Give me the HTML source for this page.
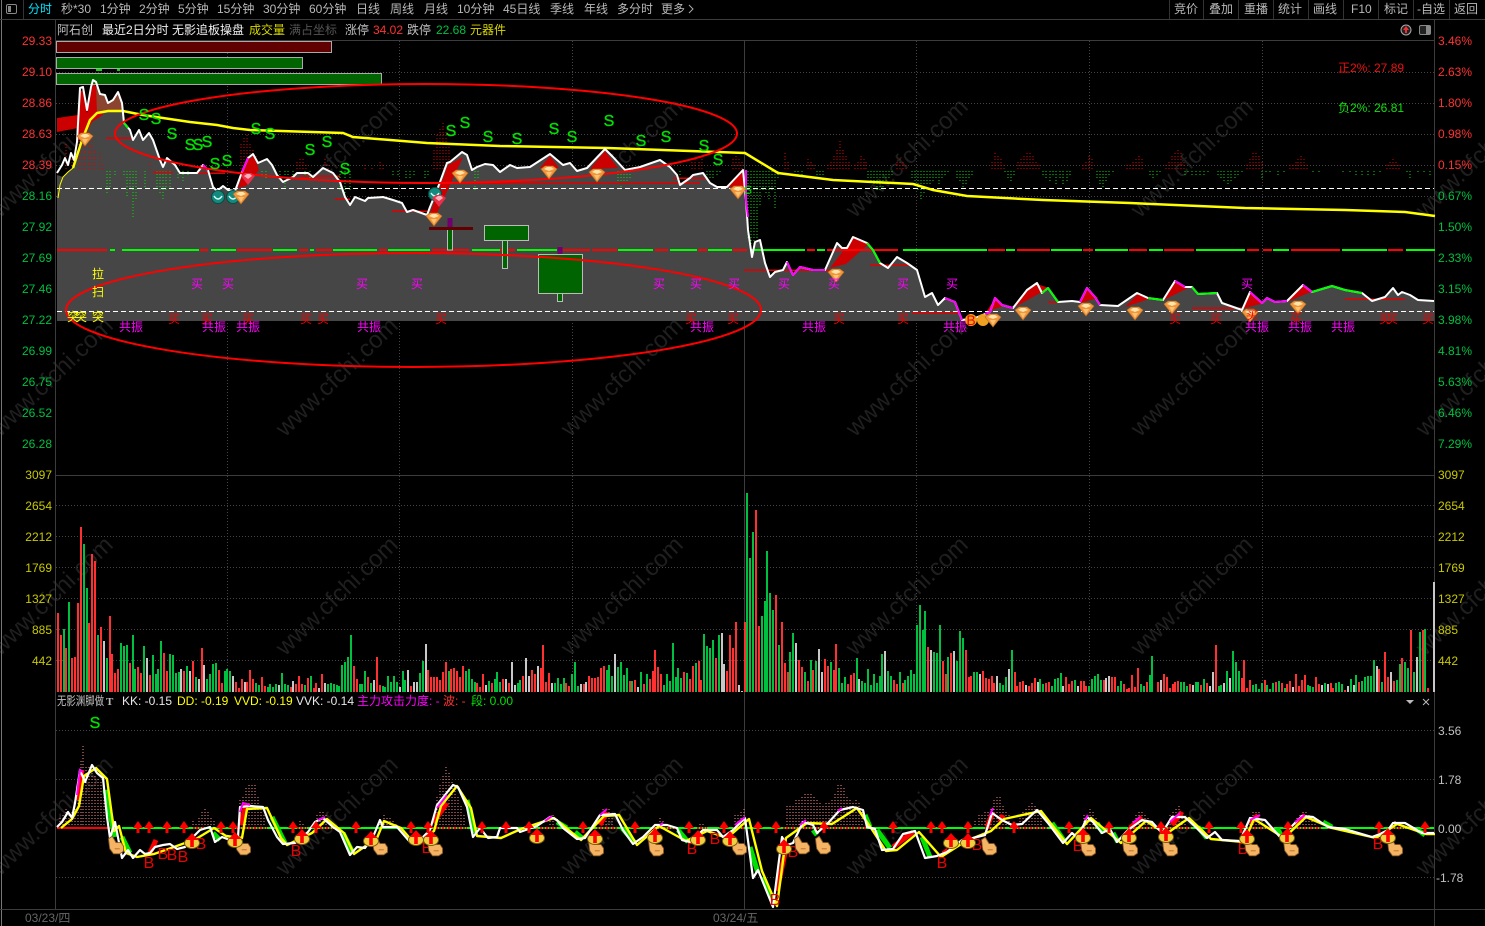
<!DOCTYPE html>
<html lang="zh"><head><meta charset="utf-8"><title>分时</title>
<style>
html,body{margin:0;padding:0;background:#000;width:1485px;height:926px;overflow:hidden}
svg{display:block}
text{font-family:"Liberation Sans","WenQuanYi Zen Hei","Noto Sans CJK SC",sans-serif;font-size:12px}
.c text{text-anchor:middle}
.w text{font-size:24px;text-anchor:middle}
.s text{font-size:16px;stroke:#00e000;stroke-width:.4}
.b text{font-size:16px}
</style></head><body>
<svg width="1485" height="926" viewBox="0 0 1485 926" xmlns="http://www.w3.org/2000/svg">
<defs>
<g id="gem"><polygon points="-8,-3 -4,-6 4,-6 8,-3 0,7" fill="#f0963c" stroke="#b86a20" stroke-width=".6"/><polygon points="-5,-3 -2,-5 2,-5 5,-3 0,-1" fill="#ffe3a8"/><polygon points="-3,0 3,0 0,5" fill="#ffc070"/></g>
<g id="gemr"><polygon points="-7,-3 -3,-6 3,-6 7,-3 0,6" fill="#e8304a"/><polygon points="-4,-3 -1,-5 2,-5 4,-3 0,0" fill="#ffb0b8"/></g>
<g id="ball"><circle r="6.5" fill="#128a7e" stroke="#0a4a44"/><path d="M-4 -1Q0 5 4 -1" fill="none" stroke="#d8fff8" stroke-width="1.5"/></g>
<polygon id="arr" points="0,0 5,7 1.5,7 1.5,12 -1.5,12 -1.5,7 -5,7" fill="#f00"/>
<g id="bag"><ellipse cx="0" cy="0" rx="7.5" ry="5.5" fill="#f0d040" stroke="#7a5a10"/><polygon points="0,-10 6,-3 1.8,-3 1.8,4 -1.8,4 -1.8,-3 -6,-3" fill="#f00"/></g>
<g id="hand" transform="scale(1.25)"><path d="M-6 -5L-3 -7L0 -2L4 -2L6 1L6 5L3 7L-2 7L-5 3Z" fill="#f4b464" stroke="#8a5a28" stroke-width=".7"/><path d="M-1 3L3 3" stroke="#c88038" fill="none"/></g>
</defs>
<rect width="1485" height="926" fill="#000"/>

<!-- watermark -->
<g class="w" fill="#1f1f1f">
<text x="51" y="166" transform="rotate(-44 51 157)">www.cfchi.com</text>
<text x="336" y="166" transform="rotate(-44 336 157)">www.cfchi.com</text>
<text x="621" y="166" transform="rotate(-44 621 157)">www.cfchi.com</text>
<text x="906" y="166" transform="rotate(-44 906 157)">www.cfchi.com</text>
<text x="1191" y="166" transform="rotate(-44 1191 157)">www.cfchi.com</text>
<text x="1476" y="166" transform="rotate(-44 1476 157)">www.cfchi.com</text>
<text x="51" y="385" transform="rotate(-44 51 376)">www.cfchi.com</text>
<text x="336" y="385" transform="rotate(-44 336 376)">www.cfchi.com</text>
<text x="621" y="385" transform="rotate(-44 621 376)">www.cfchi.com</text>
<text x="906" y="385" transform="rotate(-44 906 376)">www.cfchi.com</text>
<text x="1191" y="385" transform="rotate(-44 1191 376)">www.cfchi.com</text>
<text x="1476" y="385" transform="rotate(-44 1476 376)">www.cfchi.com</text>
<text x="51" y="604" transform="rotate(-44 51 595)">www.cfchi.com</text>
<text x="336" y="604" transform="rotate(-44 336 595)">www.cfchi.com</text>
<text x="621" y="604" transform="rotate(-44 621 595)">www.cfchi.com</text>
<text x="906" y="604" transform="rotate(-44 906 595)">www.cfchi.com</text>
<text x="1191" y="604" transform="rotate(-44 1191 595)">www.cfchi.com</text>
<text x="1476" y="604" transform="rotate(-44 1476 595)">www.cfchi.com</text>
<text x="51" y="824" transform="rotate(-44 51 815)">www.cfchi.com</text>
<text x="336" y="824" transform="rotate(-44 336 815)">www.cfchi.com</text>
<text x="621" y="824" transform="rotate(-44 621 815)">www.cfchi.com</text>
<text x="906" y="824" transform="rotate(-44 906 815)">www.cfchi.com</text>
<text x="1191" y="824" transform="rotate(-44 1191 815)">www.cfchi.com</text>
<text x="1476" y="824" transform="rotate(-44 1476 815)">www.cfchi.com</text>
</g>

<!-- frame -->
<g shape-rendering="crispEdges" fill="none">
<path d="M1.5 0V926" stroke="#777"/>
<path d="M0 19.5H1485M56 40.5H1434M56 475.5H1434M0 909.5H1485M55.5 19V909M1434.5 19V926M744.5 40V909" stroke="#3c3c3c"/>
<path d="M23.5 0V19M1169.5 0V19M1203.5 0V19M1238.5 0V19M1273.5 0V19M1308.5 0V19M1343.5 0V19M1378.5 0V19M1413.5 0V19M1449.5 0V19" stroke="#333"/>
<!-- grid -->
<path stroke="#444" stroke-dasharray="1 2" d="M56 72.5H1434M56 103.5H1434M56 134.5H1434M56 165.5H1434M56 196.5H1434M56 505.5H1434M56 536.5H1434M56 567.5H1434M56 598.5H1434M56 629.5H1434M56 660.5H1434M56 730.5H1434M56 779.5H1434M56 877.5H1434M227.5 41V692M399.5 41V692M572.5 41V692M916.5 41V692M1089.5 41V692M1262.5 41V692"/>
</g>

<!-- gray area -->
<polygon fill="#464646" points="57,321 57,175 63,177 73,168 82,140 90,120 97,113 108,111 122,111 124,123 130,130 133,140 139,130 143,140 149,133 153,140 160,160 163,167 167,158 175,165 180,173 197,173 203,165 208,170 213,187 217,191 223,186 228,190 235,191 242,172 248,158 253,154 258,163 267,159 272,165 277,175 283,182 293,177 297,173 308,173 313,177 323,168 333,173 340,182 345,197 350,205 355,197 365,201 368,198 383,197 393,200 402,203 407,212 413,210 427,215 430,207 437,190 447,163 450,162 462,152 467,155 472,170 477,167 485,164 493,165 500,172 510,165 517,168 530,167 550,154 563,165 570,163 577,171 587,168 605,149 613,157 625,170 640,167 660,160 670,167 677,175 680,185 690,178 693,175 703,173 710,183 717,187 727,187 743,170 746,200 748,230 752,257 755,242 760,240 765,263 770,277 775,272 783,270 787,262 793,275 800,267 813,270 825,270 837,243 842,248 847,248 853,237 867,243 873,250 880,263 888,268 897,257 907,263 917,270 925,297 932,293 938,305 945,298 955,302 962,320 975,318 990,312 995,298 1002,305 1013,308 1027,290 1037,283 1042,293 1048,288 1058,302 1072,301 1080,302 1087,288 1095,297 1100,305 1118,306 1137,293 1148,298 1163,300 1175,281 1185,287 1192,287 1198,294 1217,293 1222,303 1242,310 1250,292 1262,303 1267,298 1275,302 1287,301 1303,285 1312,292 1332,286 1345,290 1362,293 1372,301 1385,297 1393,288 1398,295 1402,292 1410,295 1418,300 1434,301 1434,321"/>

<!-- dotted columns top chart -->
<path fill="none" shape-rendering="crispEdges" stroke="#e00000" stroke-dasharray="1 2" d="M66 169V143M72 169V155M79 169V110M82 169V137M85 169V137M89 169V130M92 169V140M95 169V150M100 169V153M103 169V165M150 169V160M241 169V142M244 169V137M247 169V134M250 169V142M253 169V148M256 169V155M297 169V160M300 169V157M303 169V157M306 169V165M325 169V158M328 169V165M365 169V165M372 169V166M380 169V162M383 169V165M434 169V148M437 169V135M440 169V127M443 169V123M446 169V130M449 169V143M692 169V160M695 169V158M699 169V160M702 169V158M733 169V157M736 169V155M739 169V157M742 169V160M785 169V153M788 169V160M808 169V158M811 169V162M814 169V163M828 169V165M831 169V160M834 169V155M837 169V150M840 169V140M843 169V150M846 169V155M849 169V160M855 169V163M858 169V160M861 169V155M864 169V158M866 169V160M897 169V160M900 169V158M903 169V162M906 169V165M992 169V160M995 169V153M998 169V154M1001 169V158M1004 169V165M1018 169V160M1021 169V157M1024 169V155M1027 169V152M1030 169V153M1033 169V156M1036 169V160M1039 169V164M1083 169V165M1086 169V160M1089 169V155M1092 169V158M1127 169V165M1130 169V163M1133 169V160M1136 169V157M1139 169V155M1142 169V158M1166 169V165M1169 169V160M1172 169V155M1175 169V152M1178 169V150M1181 169V152M1184 169V160M1247 169V165M1250 169V158M1253 169V152M1256 169V151M1259 169V155M1262 169V160M1290 169V165M1293 169V163M1296 169V160M1298 169V158M1301 169V155M1304 169V158M1307 169V163M1387 169V165M1390 169V162M1393 169V158M1396 169V160M1399 169V163"/>
<path fill="none" shape-rendering="crispEdges" stroke="#00e000" stroke-dasharray="1 2" d="M107 171V193M110 171V187M115 171V175M124 171V177M127 171V197M130 171V187M133 171V217M136 171V200M145 171V187M157 171V187M160 171V195M163 171V200M166 171V190M170 171V187M178 171V180M183 171V182M188 171V175M262 171V175M266 171V180M280 171V178M285 171V187M288 171V180M293 171V175M305 171V175M310 171V178M340 171V190M345 171V197M350 171V190M393 171V175M398 171V176M406 171V180M410 171V178M414 171V176M425 171V178M428 171V175M475 171V190M478 171V180M618 171V185M621 171V187M624 171V185M627 171V182M630 171V178M680 171V175M707 171V178M710 171V180M713 171V178M717 171V175M720 171V172M748 171V240M751 171V245M754 171V247M757 171V240M760 171V205M763 171V190M766 171V195M769 171V200M772 171V190M775 171V210M778 171V180M795 171V175M798 171V176M802 171V175M817 171V177M820 171V176M823 171V177M868 171V178M871 171V182M874 171V186M877 171V190M880 171V190M883 171V188M886 171V183M889 171V178M892 171V176M912 171V180M915 171V184M918 171V190M921 171V199M924 171V195M927 171V185M930 171V186M933 171V182M936 171V180M939 171V184M942 171V180M945 171V176M948 171V174M957 171V178M960 171V183M963 171V187M966 171V184M969 171V180M972 171V176M1005 171V174M1008 171V178M1011 171V181M1014 171V176M1043 171V175M1046 171V178M1050 171V181M1053 171V177M1056 171V184M1060 171V180M1063 171V186M1067 171V181M1070 171V176M1097 171V179M1100 171V185M1103 171V188M1106 171V183M1109 171V177M1113 171V174M1150 171V175M1153 171V178M1157 171V176M1160 171V173M1185 171V177M1188 171V174M1192 171V176M1196 171V177M1200 171V175M1204 171V176M1208 171V174M1218 171V175M1221 171V179M1224 171V182M1228 171V184M1231 171V181M1235 171V178M1238 171V175M1242 171V174M1262 171V178M1266 171V174M1270 171V173M1278 171V175M1284 171V174M1313 171V174M1319 171V174M1343 171V173M1350 171V174M1356 171V175M1362 171V176M1368 171V177M1374 171V177M1380 171V174M1407 171V173M1410 171V178M1418 171V174M1424 171V174M1430 171V175"/>

<!-- red fills and brown -->
<polygon fill="#cc0000" points="57,118 78,115 78,128 57,132"/>
<polygon fill="#cc0000" points="80,92 83,90 87,113 91,92 93,84 96,86 103,115 92,122 83,140 78,140"/>
<polygon fill="#8a4430" points="96,86 100,95 105,96 108,104 113,101 118,93 122,104 123,111 108,111 97,113"/>
<g fill="#cc0000">
<polygon points="238,188 247,160 254,156 259,170 246,186"/>
<polygon points="430,213 437,213 463,157 448,165"/>
<polygon points="540,168 550,156 559,168"/>
<polygon points="590,169 605,151 618,168"/>
<polygon points="725,187 743,172 745,187"/>
<polygon points="830,268 853,238 870,243 846,264"/>
<polygon points="986,312 995,299 1003,306"/>
<polygon points="1015,307 1028,290 1037,284 1049,288"/>
<polygon points="1080,303 1086,289 1098,298"/>
<polygon points="1125,307 1138,294 1149,299"/>
<polygon points="1162,301 1176,282 1188,288"/>
<polygon points="1242,309 1250,293 1264,303"/>
<polygon points="1287,302 1303,286 1313,291"/>
</g>
<path fill="none" stroke="#e00000" stroke-width="1.5" shape-rendering="crispEdges" d="M106 138H132M335 199H350M392 211H427M153 172H173M673 178H707M744 270H833M870 265H910M912 313H960M1192 308H1242M1345 299H1405M1048 302H1058M198 173H225M300 176H340M440 183H700"/>

<!-- y=250 band -->
<g fill="none" stroke-width="2" shape-rendering="crispEdges">
<path stroke="#f00" d="M57 250H107M200 250H208M237 250H272M299 250H308M316 250H332M379 250H387M432 250H469M500 250H515M563 250H590M592 250H617M655 250H668M698 250H707M733 250H747M807 250H815M827 250H898M988 250H1005M1017 250H1050M1083 250H1093M1129 250H1147M1164 250H1194M1247 250H1259M1263 250H1272M1291 250H1340M1388 250H1403"/>
<path stroke="#0f0" d="M110 250H115M122 250H199M211 250H236M273 250H297M310 250H314M333 250H377M388 250H430M472 250H500M517 250H557M618 250H653M670 250H697M708 250H732M750 250H805M817 250H825M903 250H987M1006 250H1015M1051 250H1082M1095 250H1128M1149 250H1163M1196 250H1245M1273 250H1289M1342 250H1387M1406 250H1435"/>
</g>

<!-- dashed white -->
<path fill="none" stroke="#fff" stroke-dasharray="5 3" shape-rendering="crispEdges" d="M57 188.5H1434M57 311.5H1434"/>

<!-- candles -->
<path d="M96 70h6M117 70h3" stroke="#00e000" stroke-width="2" fill="none" shape-rendering="crispEdges"/>
<g shape-rendering="crispEdges">
<rect x="447.5" y="218" width="5" height="10" fill="#700070"/>
<rect x="447.5" y="229" width="5" height="21" fill="#006400" stroke="#bbb"/>
<rect x="429" y="227" width="44" height="3" fill="#600000"/>
<rect x="484.5" y="225.5" width="44" height="15" fill="#006400" stroke="#bbb"/>
<rect x="502.5" y="240.5" width="5" height="28" fill="#006400" stroke="#bbb"/>
<rect x="557.5" y="247" width="5" height="7" fill="#700070"/>
<rect x="538.5" y="254.5" width="44" height="39" fill="#006400" stroke="#bbb"/>
<rect x="557.5" y="293.5" width="5" height="8" fill="#006400" stroke="#bbb"/>
<rect x="56.5" y="41.5" width="275" height="11" fill="#600000" stroke="#aaa"/>
<rect x="56.5" y="57.5" width="246" height="11" fill="#006400" stroke="#aaa"/>
<rect x="56.5" y="73.5" width="325" height="11" fill="#006400" stroke="#aaa"/>
</g>

<!-- MA yellow -->
<polyline fill="none" stroke="#ffff00" stroke-width="1" points="58,198 60,185 63,177 68,172 73,168"/>
<polyline fill="none" stroke="#ffff00" stroke-width="2.5" points="73,168 82,140 90,120 97,113 108,111 123,111 143,115 163,118 190,122 217,125 233,128 250,130 343,133 353,137 427,143 500,146 607,148 745,153 778,173 833,180 913,184 933,190 967,196 1043,200 1130,203 1245,208 1345,210 1405,212 1435,216"/>

<!-- price white -->
<polyline fill="none" stroke="#fff" stroke-width="2" stroke-linejoin="round" points="57,173 62,165 65,158 68,165 71,153 74,160 77,142 80,88 83,87 87,110 91,87 93,80 96,82 100,94 105,95 108,103 113,100 118,92 122,103 124,123 130,130 133,140 139,130 143,140 149,133 153,140 160,160 163,167 167,158 175,165 180,173 197,173 203,165 208,170 213,187 217,191 223,186 228,190 235,191 242,172 248,158 253,154 258,163 267,159 272,165 277,175 283,182 293,177 297,173 308,173 313,177 323,168 333,173 340,182 345,197 350,205 355,197 365,201 368,198 383,197 393,200 402,203 407,212 413,210 427,215 430,207 437,190 447,163 450,162 462,152 467,155 472,170 477,167 485,164 493,165 500,172 510,165 517,168 530,167 550,154 563,165 570,163 577,171 587,168 605,149 613,157 625,170 640,167 660,160 670,167 677,175 680,185 690,178 693,175 703,173 710,183 717,187 727,187 743,170 746,200 748,230 752,257 755,242 760,240 765,263 770,277 775,272 783,270 787,262 793,275 800,267 813,270 825,270 837,243 842,248 847,248 853,237 867,243 873,250 880,263 888,268 897,257 907,263 917,270 925,297 932,293 938,305 945,298 955,302 962,320 975,318 990,312 995,298 1002,305 1013,308 1027,290 1037,283 1042,293 1048,288 1058,302 1072,301 1080,302 1087,288 1095,297 1100,305 1118,306 1137,293 1148,298 1163,300 1175,281 1185,287 1192,287 1198,294 1217,293 1222,303 1242,310 1250,292 1262,303 1267,298 1275,302 1287,301 1303,285 1312,292 1332,286 1345,290 1362,293 1372,301 1385,297 1393,288 1398,295 1402,292 1410,295 1418,300 1434,301"/>
<g fill="none" stroke-width="2" stroke-linejoin="round">
<path stroke="#ff00ff" d="M746 170L746 200L748 217M787 262L793 275L800 267L813 270L825 270M945 298L955 302L962 320M985 314L990 312L995 298L1002 305L1013 308M1250 292L1262 303L1267 298L1275 302L1287 301M1303 285L1312 292M203 165L208 170M242 172L248 158M1080 302L1087 288L1095 297L1100 305M1175 281L1185 287"/>
<path stroke="#0f0" d="M867 243L873 250L880 263M1042 293L1048 288L1058 302M1148 298L1163 300M1192 287L1198 294L1217 293M1312 292L1332 286L1345 290L1362 293M124 123L128 128"/>
</g>

<!-- ellipses -->
<ellipse cx="426" cy="133.5" rx="311" ry="49.5" fill="none" stroke="#f00" stroke-width="2"/>
<ellipse cx="413.5" cy="310" rx="347.5" ry="57" fill="none" stroke="#f00" stroke-width="2"/>

<!-- gems -->
<use href="#gem" x="85" y="139"/><use href="#ball" x="218" y="197"/><use href="#ball" x="233" y="197"/><use href="#gem" x="241" y="197"/><use href="#gemr" x="248" y="179"/><use href="#ball" x="435" y="194"/><use href="#gemr" x="439" y="201"/><use href="#gem" x="434" y="219"/><use href="#gem" x="460" y="176"/><use href="#gem" x="549" y="172"/><use href="#gem" x="597" y="175"/><use href="#gem" x="738" y="192"/><use href="#gem" x="836" y="275"/>
<circle cx="971" cy="320" r="6" fill="#f0a020"/><circle cx="983" cy="320" r="6" fill="#f0a020"/>
<use href="#gem" x="993" y="320"/><use href="#gem" x="1023" y="313"/><use href="#gem" x="1086" y="309"/><use href="#gem" x="1135" y="313"/><use href="#gem" x="1172" y="307"/><use href="#gem" x="1250" y="315"/><use href="#gem" x="1298" y="307"/>

<!-- S -->
<g class="c s" fill="#00e000">
<text x="144" y="120">S</text><text x="156" y="124">S</text><text x="172" y="139">S</text><text x="190" y="150">S</text><text x="198" y="150">S</text><text x="207" y="147">S</text><text x="215" y="169">S</text><text x="227" y="166">S</text><text x="256" y="134">S</text><text x="270" y="139">S</text><text x="310" y="155">S</text><text x="327" y="147">S</text><text x="345" y="174">S</text><text x="451" y="136">S</text><text x="465" y="128">S</text><text x="488" y="142">S</text><text x="517" y="144">S</text><text x="554" y="134">S</text><text x="572" y="142">S</text><text x="609" y="126">S</text><text x="641" y="146">S</text><text x="666" y="142">S</text><text x="704" y="151">S</text><text x="718" y="165">S</text><text x="95" y="728">S</text>
</g>
<text x="748" y="194" fill="#00e000" text-anchor="middle">S</text>
<g class="c" fill="#ffff00"><text x="98" y="278">拉</text><text x="98" y="296">扫</text><text x="73" y="321">突</text><text x="81" y="321">突</text><text x="98" y="321">突</text></g>
<g class="c" fill="#ff00ff"><text x="197" y="288">买</text><text x="228" y="288">买</text><text x="362" y="288">买</text><text x="417" y="288">买</text><text x="659" y="288">买</text><text x="696" y="288">买</text><text x="734" y="288">买</text><text x="784" y="288">买</text><text x="834" y="288">买</text><text x="903" y="288">买</text><text x="952" y="288">买</text><text x="1247" y="288">买</text></g>
<g class="c" fill="#ee0000"><text x="174" y="323">买</text><text x="207" y="323">买</text><text x="248" y="323">买</text><text x="306" y="323">买</text><text x="323" y="323">买</text><text x="441" y="323">买</text><text x="691" y="323">买</text><text x="733" y="323">买</text><text x="839" y="323">买</text><text x="903" y="323">买</text><text x="1175" y="323">买</text><text x="1216" y="323">买</text><text x="1252" y="319">买</text><text x="1296" y="322">买</text><text x="1385" y="323">买</text><text x="1392" y="323">买</text><text x="1428" y="323">买</text><text x="971" y="325" style="font-size:14px">B</text></g>
<g class="c" fill="#ff00ff"><text x="131" y="331">共振</text><text x="214" y="331">共振</text><text x="248" y="331">共振</text><text x="369" y="331">共振</text><text x="702" y="331">共振</text><text x="814" y="331">共振</text><text x="955" y="331">共振</text><text x="1257" y="331">共振</text><text x="1300" y="331">共振</text><text x="1343" y="331">共振</text></g>
<text x="1338" y="72" fill="#ee1010">正2%: 27.89</text>
<text x="1338" y="112" fill="#10e010">负2%: 26.81</text>

<!-- volume -->
<g fill="none" stroke-width="2" shape-rendering="crispEdges">
<path stroke="#ff3030" d="M58 692v-79M61 692v-57M66 692v-44M72 692v-34M75 692v-35M78 692v-89M81 692v-165M89 692v-69M92 692v-138M95 692v-131M101 692v-65M110 692v-76M112 692v-38M115 692v-19M118 692v-23M130 692v-29M138 692v-25M141 692v-19M150 692v-17M164 692v-39M167 692v-21M184 692v-21M193 692v-31M202 692v-44M219 692v-22M222 692v-9M236 692v-10M239 692v-4M242 692v-13M247 692v-10M250 692v-22M253 692v-13M262 692v-15M265 692v-6M291 692v-5M296 692v-8M299 692v-16M302 692v-8M308 692v-14M314 692v-4M316 692v-9M322 692v-18M354 692v-26M357 692v-13M368 692v-15M377 692v-35M380 692v-7M411 692v-6M428 692v-22M431 692v-15M434 692v-15M437 692v-15M440 692v-12M443 692v-20M446 692v-30M451 692v-23M454 692v-24M457 692v-21M460 692v-15M463 692v-26M477 692v-9M480 692v-5M483 692v-18M492 692v-9M503 692v-13M509 692v-9M523 692v-16M532 692v-22M535 692v-18M541 692v-24M543 692v-47M546 692v-10M549 692v-19M566 692v-9M569 692v-6M584 692v-8M589 692v-16M592 692v-14M595 692v-14M598 692v-15M601 692v-24M604 692v-26M630 692v-11M635 692v-12M644 692v-8M650 692v-13M653 692v-21M655 692v-42M658 692v-25M661 692v-18M684 692v-20M690 692v-13M693 692v-26M699 692v-31M701 692v-12M716 692v-34M727 692v-21M730 692v-57M733 692v-44M736 692v-70M745 692v-70M756 692v-182M759 692v-66M776 692v-97M782 692v-70M785 692v-29M788 692v-20M799 692v-32M802 692v-25M808 692v-11M813 692v-22M825 692v-33M828 692v-26M834 692v-22M836 692v-48M848 692v-8M851 692v-17M854 692v-19M894 692v-12M897 692v-8M903 692v-9M928 692v-45M943 692v-31M946 692v-18M951 692v-39M966 692v-42M969 692v-15M971 692v-16M983 692v-21M986 692v-14M989 692v-13M992 692v-16M994 692v-9M1015 692v-20M1017 692v-6M1020 692v-10M1023 692v-11M1029 692v-6M1032 692v-9M1035 692v-14M1046 692v-9M1049 692v-10M1066 692v-15M1069 692v-8M1072 692v-11M1081 692v-11M1084 692v-11M1086 692v-6M1104 692v-12M1112 692v-15M1115 692v-15M1124 692v-8M1127 692v-3M1129 692v-4M1132 692v-17M1135 692v-5M1138 692v-24M1147 692v-10M1158 692v-10M1164 692v-18M1167 692v-15M1170 692v-4M1173 692v-8M1175 692v-10M1178 692v-11M1190 692v-8M1201 692v-7M1207 692v-9M1216 692v-47M1242 692v-14M1244 692v-32M1247 692v-4M1250 692v-12M1265 692v-12M1276 692v-10M1282 692v-9M1287 692v-8M1290 692v-11M1296 692v-18M1299 692v-6M1302 692v-12M1305 692v-17M1316 692v-15M1319 692v-8M1331 692v-9M1333 692v-4M1345 692v-2M1359 692v-10M1379 692v-23M1385 692v-40M1388 692v-15M1394 692v-11M1402 692v-34M1411 692v-62M1423 692v-62M1428 692v-4"/>
<path stroke="#00c040" d="M64 692v-63M69 692v-90M84 692v-148M87 692v-104M98 692v-57M107 692v-34M121 692v-49M124 692v-46M127 692v-47M133 692v-57M135 692v-23M144 692v-46M153 692v-37M156 692v-18M158 692v-23M161 692v-51M170 692v-38M173 692v-37M176 692v-19M179 692v-20M187 692v-26M196 692v-15M207 692v-13M210 692v-18M213 692v-28M216 692v-29M225 692v-21M227 692v-23M230 692v-21M256 692v-9M259 692v-7M268 692v-5M270 692v-8M273 692v-5M276 692v-8M282 692v-19M285 692v-8M288 692v-7M305 692v-7M311 692v-16M328 692v-8M331 692v-9M334 692v-8M337 692v-7M339 692v-6M342 692v-27M345 692v-30M348 692v-35M351 692v-57M360 692v-8M362 692v-8M365 692v-21M371 692v-9M383 692v-6M385 692v-5M388 692v-16M391 692v-10M394 692v-16M397 692v-10M403 692v-21M405 692v-12M420 692v-19M423 692v-31M449 692v-21M466 692v-21M469 692v-23M472 692v-13M475 692v-10M489 692v-11M495 692v-13M497 692v-20M500 692v-10M518 692v-9M520 692v-12M555 692v-9M558 692v-14M561 692v-8M564 692v-14M572 692v-18M575 692v-30M578 692v-6M607 692v-22M609 692v-27M612 692v-16M618 692v-25M621 692v-30M624 692v-17M627 692v-24M632 692v-11M641 692v-20M647 692v-18M664 692v-7M667 692v-18M670 692v-11M673 692v-49M676 692v-15M678 692v-24M681 692v-14M687 692v-19M696 692v-29M704 692v-58M707 692v-46M710 692v-44M713 692v-52M719 692v-57M747 692v-199M750 692v-134M753 692v-160M762 692v-76M765 692v-91M767 692v-141M770 692v-99M773 692v-82M779 692v-47M790 692v-40M793 692v-59M805 692v-20M811 692v-32M816 692v-31M831 692v-30M839 692v-24M842 692v-9M845 692v-15M857 692v-34M862 692v-11M865 692v-9M868 692v-23M871 692v-7M874 692v-18M877 692v-9M880 692v-16M882 692v-38M888 692v-21M891 692v-16M900 692v-20M905 692v-12M908 692v-16M911 692v-22M914 692v-18M917 692v-67M920 692v-87M923 692v-62M925 692v-81M934 692v-40M937 692v-39M940 692v-67M948 692v-35M957 692v-31M960 692v-61M963 692v-54M974 692v-20M977 692v-20M1000 692v-9M1003 692v-7M1006 692v-15M1012 692v-42M1040 692v-13M1043 692v-8M1052 692v-6M1055 692v-13M1058 692v-14M1061 692v-19M1075 692v-12M1089 692v-6M1092 692v-13M1095 692v-16M1098 692v-18M1101 692v-12M1118 692v-6M1121 692v-11M1141 692v-8M1144 692v-6M1150 692v-17M1152 692v-36M1181 692v-10M1184 692v-10M1187 692v-6M1196 692v-10M1198 692v-10M1204 692v-13M1219 692v-6M1221 692v-7M1227 692v-21M1233 692v-41M1236 692v-30M1239 692v-21M1253 692v-7M1256 692v-8M1259 692v-3M1262 692v-9M1267 692v-7M1270 692v-3M1273 692v-9M1279 692v-11M1285 692v-4M1308 692v-7M1310 692v-6M1313 692v-5M1325 692v-9M1336 692v-9M1339 692v-10M1342 692v-8M1351 692v-13M1356 692v-17M1362 692v-11M1365 692v-15M1368 692v-16M1371 692v-16M1374 692v-32M1382 692v-10M1397 692v-12M1400 692v-28M1405 692v-30M1408 692v-24M1414 692v-20M1420 692v-60M1425 692v-63"/>
<path stroke="#c8c8c8" d="M104 692v-51M147 692v-34M181 692v-23M190 692v-21M199 692v-13M204 692v-27M233 692v-16M245 692v-10M279 692v-7M293 692v-11M319 692v-4M325 692v-9M374 692v-12M400 692v-5M408 692v-22M414 692v-10M417 692v-10M426 692v-48M486 692v-7M506 692v-13M512 692v-30M515 692v-7M526 692v-34M529 692v-16M538 692v-26M552 692v-9M581 692v-8M586 692v-10M615 692v-38M638 692v-5M722 692v-59M724 692v-28M739 692v-7M742 692v-1M796 692v-49M819 692v-43M822 692v-20M859 692v-13M885 692v-41M931 692v-42M954 692v-41M980 692v-18M997 692v-16M1009 692v-23M1026 692v-7M1038 692v-10M1063 692v-6M1078 692v-6M1106 692v-14M1109 692v-16M1161 692v-12M1193 692v-7M1210 692v-6M1213 692v-20M1224 692v-9M1230 692v-14M1293 692v-5M1322 692v-7M1328 692v-8M1348 692v-6M1354 692v-7M1377 692v-26M1391 692v-20M1417 692v-35M1434 692v-110"/>
</g>

<!-- indicator: pink dots -->
<path fill="none" shape-rendering="crispEdges" stroke="#ff8888" stroke-dasharray="1 2" d="M60 828V818M63 828V815M66 828V808M69 828V812M72 828V812M75 828V800M78 828V780M81 828V760M83 828V746M86 828V765M89 828V765M92 828V770M95 828V775M98 828V778M101 828V780M104 828V795M193 828V820M196 828V822M199 828V818M202 828V810M205 828V807M208 828V812M211 828V816M214 828V820M240 828V800M243 828V795M246 828V788M249 828V783M252 828V783M255 828V785M258 828V795M261 828V805M264 828V815M300 828V820M303 828V822M317 828V815M320 828V812M323 828V810M326 828V815M380 828V820M384 828V815M387 828V816M390 828V818M393 828V820M396 828V822M437 828V795M440 828V785M443 828V775M446 828V767M449 828V772M452 828V782M455 828V790M458 828V795M461 828V805M464 828V815M535 828V822M550 828V818M553 828V815M603 828V807M606 828V807M609 828V809M612 828V815M660 828V818M663 828V820M700 828V823M703 828V822M706 828V825M735 828V815M738 828V815M741 828V812M744 828V808M787 828V805M790 828V806M793 828V806M796 828V800M799 828V798M802 828V795M805 828V793M808 828V793M811 828V793M814 828V795M817 828V798M820 828V803M823 828V806M826 828V803M829 828V802M832 828V798M835 828V792M838 828V783M841 828V785M844 828V788M847 828V795M850 828V800M853 828V802M856 828V800M859 828V803M862 828V808M975 828V820M979 828V815M982 828V813M985 828V812M988 828V810M991 828V808M994 828V798M997 828V797M1000 828V797M1003 828V805M1006 828V810M1009 828V815M1020 828V815M1023 828V812M1026 828V808M1029 828V805M1032 828V803M1035 828V804M1038 828V808M1041 828V815M1084 828V815M1087 828V813M1090 828V808M1093 828V812M1096 828V818M1133 828V820M1136 828V815M1139 828V812M1142 828V810M1145 828V813M1148 828V818M1151 828V822M1170 828V815M1173 828V810M1176 828V808M1179 828V806M1182 828V810M1185 828V818M1250 828V816M1253 828V812M1256 828V810M1259 828V812M1262 828V820M1294 828V822M1297 828V818M1300 828V815M1303 828V812M1306 828V810M1309 828V813M1312 828V818M1315 828V822M1392 828V825M1395 828V820M1398 828V822M1401 828V825"/>

<!-- zero line -->
<path fill="none" stroke="#0f0" stroke-width="2" shape-rendering="crispEdges" d="M122 828H1434"/>
<path fill="none" stroke="#f00" stroke-width="2" shape-rendering="crispEdges" d="M57 828H120"/>
<path fill="none" stroke="#f00" stroke-width="2" stroke-dasharray="2 1" shape-rendering="crispEdges" d="M193 828H207M233 828H267M297 828H307M317 828H333M433 828H467M500 828H507M540 828H557M597 828H617M653 828H677M697 828H707M733 828H745M783 828H867M985 828H1005M1015 828H1048M1082 828H1095M1128 828H1155M1168 828H1192M1248 828H1275M1295 828H1322M1328 828H1338M1392 828H1405"/>

<!-- indicator fills -->
<g fill="none" stroke="#00e000" stroke-width="5" stroke-linejoin="round">
<path d="M105 790L115 837M122 837L130 853M213 833L220 840M272 817L285 843M343 833L353 853M467 800L475 833M557 822L567 828M575 832L582 838M622 828L635 843M678 830L688 842M750 847L758 873M763 877L772 900M813 830L817 835M865 815L870 827M877 830L890 848M922 837L930 857M1052 823L1065 842M1097 823L1103 833M1113 833L1118 842M1198 827L1207 838M1277 828L1282 837M1323 822L1332 827M1418 830L1425 835"/>
</g>
<g fill="none" stroke="#f00" stroke-width="5">
<path d="M777 891L785 853M240 825L247 803M433 823L447 803M150 853L156 840M893 847L913 832M943 854L948 850M78 800L82 770M600 825L607 812M1000 822L1003 815M987 827L993 812M1130 828L1142 817M1172 825L1182 812M1250 824L1258 815M1295 825L1305 815"/>
</g>
<!-- yellow & white lines -->
<polyline transform="translate(4 1)" fill="none" stroke="#ffff00" stroke-width="2.4" stroke-linejoin="round" points="57,827 68,818 75,805 80,775 92,767 103,778 110,830 115,825 122,852 133,856 150,853 170,846 192,838 210,827 222,835 238,837 243,808 263,807 277,837 283,844 308,832 323,818 340,832 350,853 373,837 380,820 397,827 410,842 430,830 437,805 453,785 467,807 473,835 497,837 517,828 550,817 577,839 600,815 615,814 633,844 655,825 682,840 703,830 723,837 745,818 758,870 773,905 782,837 803,822 828,823 853,807 867,827 882,850 893,849 915,831 937,856 962,840 987,830 1000,818 1037,810 1063,843 1087,817 1117,842 1142,820 1162,833 1185,817 1207,838 1240,841 1250,818 1280,837 1302,816 1328,827 1372,837 1393,823 1422,833 1431,833"/>
<polyline fill="none" stroke="#fff" stroke-width="2.2" stroke-linejoin="round" points="57,827 62,822 65,817 68,812 72,818 75,803 80,770 85,782 92,765 97,773 103,778 107,817 110,838 115,822 122,858 128,850 133,858 140,850 145,854 150,853 155,847 163,845 170,844 177,849 185,847 192,838 200,830 210,827 215,842 222,837 230,840 238,837 240,807 250,806 263,807 268,820 277,837 283,844 295,843 308,832 315,822 323,818 333,827 340,832 350,855 357,847 365,848 373,837 380,820 383,827 397,827 410,842 423,837 430,830 437,805 453,785 458,787 467,807 473,837 480,828 488,838 497,837 500,828 517,828 520,832 537,826 550,817 557,820 563,828 577,839 585,838 600,815 615,814 623,830 633,844 643,837 655,825 667,825 677,828 682,840 690,842 703,830 717,830 723,837 733,830 745,818 753,878 758,870 773,907 782,837 787,845 793,843 803,822 813,825 817,833 828,823 840,810 853,807 863,810 867,827 875,829 882,850 893,849 903,834 915,831 925,858 937,856 947,852 962,840 973,838 985,835 992,813 1002,820 1012,825 1022,824 1037,810 1048,823 1063,843 1072,833 1078,838 1087,817 1093,822 1102,833 1110,829 1117,842 1128,830 1142,820 1152,822 1162,833 1172,817 1185,817 1207,838 1215,832 1222,840 1240,841 1250,818 1265,820 1280,837 1288,830 1302,816 1313,817 1328,827 1345,829 1372,837 1380,834 1388,830 1393,823 1405,823 1422,833 1434,833"/>
<path fill="none" stroke="#ff00ff" stroke-width="2" d="M77 795L80 770L83 772M240 812L243 803L250 805M318 820L325 817M437 808L447 795M545 821L552 816M600 815L607 809M660 825L663 823M735 825L745 817M800 825L806 820M838 811L842 808M990 815L993 808M1085 820L1088 815M1133 823L1140 817M1170 822L1180 813M1250 820L1260 815M1295 822L1305 815"/>

<!-- arrows -->
<g><use href="#arr" x="138" y="821"/><use href="#arr" x="149" y="821"/><use href="#arr" x="167" y="821"/><use href="#arr" x="184" y="821"/><use href="#arr" x="221" y="821"/><use href="#arr" x="233" y="821"/><use href="#arr" x="293" y="821"/><use href="#arr" x="316" y="821"/><use href="#arr" x="356" y="821"/><use href="#arr" x="411" y="821"/><use href="#arr" x="428" y="821"/><use href="#arr" x="482" y="821"/><use href="#arr" x="506" y="821"/><use href="#arr" x="529" y="821"/><use href="#arr" x="583" y="821"/><use href="#arr" x="635" y="821"/><use href="#arr" x="689" y="821"/><use href="#arr" x="724" y="821"/><use href="#arr" x="758" y="821"/><use href="#arr" x="776" y="821"/><use href="#arr" x="824" y="821"/><use href="#arr" x="893" y="821"/><use href="#arr" x="931" y="821"/><use href="#arr" x="942" y="821"/><use href="#arr" x="968" y="821"/><use href="#arr" x="1014" y="821"/><use href="#arr" x="1069" y="821"/><use href="#arr" x="1109" y="821"/><use href="#arr" x="1161" y="821"/><use href="#arr" x="1209" y="821"/><use href="#arr" x="1241" y="821"/><use href="#arr" x="1288" y="821"/><use href="#arr" x="1379" y="821"/><use href="#arr" x="1425" y="821"/></g>

<!-- B labels -->
<g class="c b" fill="#ee0000">
<text x="149" y="868">B</text><text x="163" y="859">B</text><text x="172" y="860">B</text><text x="183" y="862">B</text><text x="201" y="849">B</text><text x="296" y="856">B</text><text x="427" y="853">B</text><text x="692" y="854">B</text><text x="715" y="844">B</text><text x="775" y="905">B</text><text x="793" y="857">B</text><text x="942" y="868">B</text><text x="977" y="850">B</text><text x="1078" y="851">B</text><text x="1243" y="854">B</text><text x="1378" y="849">B</text>
</g>
<!-- hands -->
<use href="#hand" x="116" y="845"/><use href="#hand" x="243" y="846"/><use href="#hand" x="380" y="846"/><use href="#hand" x="435" y="847"/><use href="#hand" x="596" y="847"/><use href="#hand" x="656" y="847"/><use href="#hand" x="739" y="846"/><use href="#hand" x="802" y="845"/><use href="#hand" x="823" y="845"/><use href="#hand" x="989" y="846"/><use href="#hand" x="1088" y="847"/><use href="#hand" x="1130" y="847"/><use href="#hand" x="1170" y="847"/><use href="#hand" x="1252" y="847"/><use href="#hand" x="1291" y="847"/><use href="#hand" x="1395" y="847"/>
<!-- bags -->
<use href="#bag" x="192" y="843"/><use href="#bag" x="235" y="842"/><use href="#bag" x="302" y="839"/><use href="#bag" x="371" y="841"/><use href="#bag" x="416" y="840"/><use href="#bag" x="431" y="840"/><use href="#bag" x="537" y="838"/><use href="#bag" x="595" y="839"/><use href="#bag" x="655" y="838"/><use href="#bag" x="698" y="840"/><use href="#bag" x="730" y="841"/><use href="#bag" x="784" y="849"/><use href="#bag" x="951" y="843"/><use href="#bag" x="968" y="843"/><use href="#bag" x="1083" y="838"/><use href="#bag" x="1129" y="838"/><use href="#bag" x="1166" y="837"/><use href="#bag" x="1247" y="839"/><use href="#bag" x="1287" y="838"/><use href="#bag" x="1388" y="838"/>

<!-- axis labels -->
<g text-anchor="end">
<g fill="#ff3232"><text x="52" y="45">29.33</text><text x="52" y="76">29.10</text><text x="52" y="107">28.86</text><text x="52" y="138">28.63</text><text x="52" y="169">28.39</text></g>
<g fill="#00c040"><text x="52" y="200">28.16</text><text x="52" y="231">27.92</text><text x="52" y="262">27.69</text><text x="52" y="293">27.46</text><text x="52" y="324">27.22</text><text x="52" y="355">26.99</text><text x="52" y="386">26.75</text><text x="52" y="417">26.52</text><text x="52" y="448">26.28</text></g>
<g fill="#c8c800"><text x="52" y="479">3097</text><text x="52" y="510">2654</text><text x="52" y="541">2212</text><text x="52" y="572">1769</text><text x="52" y="603">1327</text><text x="52" y="634">885</text><text x="52" y="665">442</text></g>
</g>
<g fill="#ff3232"><text x="1438" y="45">3.46%</text><text x="1438" y="76">2.63%</text><text x="1438" y="107">1.80%</text><text x="1438" y="138">0.98%</text><text x="1438" y="169">0.15%</text></g>
<g fill="#00c040"><text x="1438" y="200">0.67%</text><text x="1438" y="231">1.50%</text><text x="1438" y="262">2.33%</text><text x="1438" y="293">3.15%</text><text x="1438" y="324">3.98%</text><text x="1438" y="355">4.81%</text><text x="1438" y="386">5.63%</text><text x="1438" y="417">6.46%</text><text x="1438" y="448">7.29%</text></g>
<g fill="#c8c800"><text x="1438" y="479">3097</text><text x="1438" y="510">2654</text><text x="1438" y="541">2212</text><text x="1438" y="572">1769</text><text x="1438" y="603">1327</text><text x="1438" y="634">885</text><text x="1438" y="665">442</text></g>
<g fill="#c0c0c0"><text x="1438" y="735">3.56</text><text x="1438" y="784">1.78</text><text x="1438" y="833">0.00</text><text x="1436" y="882">-1.78</text></g>
<g fill="#666"><text x="25" y="922">03/23/四</text><text x="713" y="922">03/24/五</text></g>

<!-- toolbar -->
<g fill="#b8b8b8">
<text x="28" y="13" fill="#00e5ff">分时</text><text x="61" y="13">秒*30</text><text x="100" y="13">1分钟</text><text x="139" y="13">2分钟</text><text x="178" y="13">5分钟</text><text x="217" y="13">15分钟</text><text x="263" y="13">30分钟</text><text x="309" y="13">60分钟</text><text x="356" y="13">日线</text><text x="390" y="13">周线</text><text x="424" y="13">月线</text><text x="457" y="13">10分钟</text><text x="503" y="13">45日线</text><text x="550" y="13">季线</text><text x="584" y="13">年线</text><text x="617" y="13">多分时</text><text x="661" y="13">更多</text>
<text x="1174" y="13">竞价</text><text x="1209" y="13">叠加</text><text x="1244" y="13">重播</text><text x="1278" y="13">统计</text><text x="1313" y="13">画线</text><text x="1351" y="13">F10</text><text x="1384" y="13">标记</text><text x="1417" y="13">-自选</text><text x="1454" y="13">返回</text>
</g>
<path d="M689 5L693 9L689 13" fill="none" stroke="#aaa"/>
<rect x="6.5" y="4.5" width="10" height="9" rx="1.5" fill="none" stroke="#888"/><rect x="8" y="6" width="3" height="6" fill="#888"/>

<!-- header row -->
<text x="57" y="34" fill="#c0c0c0">阿石创</text>
<text x="102" y="34" fill="#f0f0f0">最近2日分时 无影追板操盘</text>
<text x="249" y="34" fill="#d8d800">成交量</text>
<text x="289" y="34" fill="#555">满占坐标</text>
<text x="345" y="34" fill="#c0c0c0">涨停</text>
<text x="373" y="34" fill="#ff3232">34.02</text>
<text x="407" y="34" fill="#c0c0c0">跌停</text>
<text x="436" y="34" fill="#00c040">22.68</text>
<text x="470" y="34" fill="#d8d800">元器件</text>
<circle cx="1406" cy="30" r="5" fill="#222" stroke="#aaa"/><polygon points="1406,26 1409,30 1407,30 1407,33 1405,33 1405,30 1403,30" fill="#f03030"/>
<rect x="1419.5" y="25.5" width="11" height="9" rx="1.5" fill="#222" stroke="#888"/><rect x="1426" y="26" width="4" height="8" fill="#888"/>

<!-- indicator header -->
<text x="57" y="705" fill="#c0c0c0" textLength="47" lengthAdjust="spacingAndGlyphs">无影渊脚做</text>
<text x="106" y="705" fill="#bbb" style="font-family:'Liberation Serif',serif;font-size:11px;font-weight:bold">T</text>
<text x="122" y="705" fill="#e8e8e8">KK: -0.15</text>
<text x="177" y="705" fill="#ffff00">DD: -0.19</text>
<text x="234" y="705" fill="#ffff00">VVD: -0.19</text>
<text x="296" y="705" fill="#e8e8e8">VVK: -0.14</text>
<text x="357" y="705" fill="#ff00ff">主力攻击力度: -</text>
<text x="443" y="705" fill="#ff3030">波: -</text>
<text x="471" y="705" fill="#00e000">段: 0.00</text>
<polygon points="1406,700 1414,700 1410,704" fill="#bbb"/>
<path d="M1423 699L1429 705M1429 699L1423 705" stroke="#bbb" fill="none"/>
</svg>
</body></html>
